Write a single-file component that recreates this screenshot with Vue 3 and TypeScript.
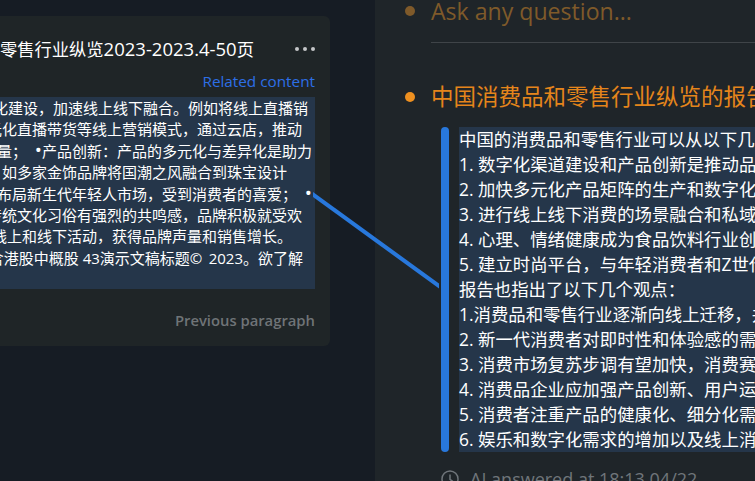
<script setup lang="ts">
type SourceLine = { text: string; gap: number };

// gap = distance from the right edge of the highlight to the end of the line
const sourceLines: SourceLine[] = [
  { text: '字化建设，加速线上线下融合。例如将线上直播销', gap: 7 },
  { text: '多元化直播带货等线上营销模式，通过云店，推动', gap: 13 },
  { text: '销流量；  •产品创新：产品的多元化与差异化是助力', gap: 3 },
  { text: '牌，如多家金饰品牌将国潮之风融合到珠宝设计', gap: 28 },
  { text: '，布局新生代年轻人市场，受到消费者的喜爱；  •', gap: 3 },
  { text: '传统文化习俗有强烈的共鸣感，品牌积极就受欢', gap: 13 },
  { text: '动线上和线下活动，获得品牌声量和销售增长。', gap: 23 },
  { text: '含港股中概股 43演示文稿标题©\u2009 2023。欲了解', gap: 12 },
];

const answerLines: string[] = [
  '中国的消费品和零售行业可以从以下几个方面',
  '1. 数字化渠道建设和产品创新是推动品',
  '2. 加快多元化产品矩阵的生产和数字化',
  '3. 进行线上线下消费的场景融合和私域',
  '4. 心理、情绪健康成为食品饮料行业创',
  '5. 建立时尚平台，与年轻消费者和Z世代',
  '报告也指出了以下几个观点：',
  '1.消费品和零售行业逐渐向线上迁移，并',
  '2. 新一代消费者对即时性和体验感的需',
  '3. 消费市场复苏步调有望加快，消费赛',
  '4. 消费品企业应加强产品创新、用户运',
  '5. 消费者注重产品的健康化、细分化需',
  '6. 娱乐和数字化需求的增加以及线上消',
];
</script>

<template>
  <div class="page">
    <section class="source-pane">
      <div class="card">
        <header class="card-head">
          <h2 class="card-title">中国消费品和零售行业纵览<span class="title-num">2023-2023.4-50</span>页</h2>
          <div class="dots"><i></i><i></i><i></i></div>
        </header>
        <div class="related">Related content</div>
        <div class="excerpt">
          <div
            v-for="line in sourceLines"
            :key="line.text"
            class="excerpt-line"
            :style="{ paddingRight: line.gap + 'px' }"
          >
            <template v-for="(part, i) in line.text.split('•')" :key="i"><span v-if="i" class="bullet">•</span>{{ part }}</template>
          </div>
        </div>
        <div class="previous">Previous paragraph</div>
      </div>
    </section>

    <section class="chat-pane">
      <div class="question muted">
        <span class="dot"></span>
        <span class="ask">Ask any question...</span>
      </div>
      <div class="rule"></div>
      <div class="question">
        <span class="dot"></span>
        <h1 class="question-title">中国消费品和零售行业纵览的报告</h1>
      </div>
      <div class="answer">
        <div class="answer-bar"></div>
        <div class="answer-text">
          <div v-for="line in answerLines" :key="line" class="answer-line">{{ line }}</div>
        </div>
      </div>
      <div class="answered">
        <svg class="clock" width="18" height="18" viewBox="0 0 18 18" fill="none" stroke="#6f757a" stroke-width="1.5">
          <circle cx="9" cy="9" r="8" />
          <path d="M9 4.5V9.4L11.8 11.4" />
        </svg>
        <span>AI answered at 18:13 04/22</span>
      </div>
    </section>

    <!-- link from the highlighted source to the answer -->
    <svg class="link" width="755" height="481" viewBox="0 0 755 481">
      <polygon points="313,192 439,283.5 439,288.5 313,197" fill="#2878dc" />
    </svg>
  </div>
</template>

<style>
html,
body {
  margin: 0;
  background: #161c24;
}
</style>

<style scoped>
.page {
  position: relative;
  display: flex;
  width: 755px;
  height: 481px;
  overflow: hidden;
  background: #161c24;
  color: #fff;
  font-family: "Open Sans", "Noto Sans CJK SC", sans-serif;
}
.source-pane {
  flex: 0 0 375px;
  overflow: hidden;
  padding-top: 16px;
  box-sizing: border-box;
}
.card {
  box-sizing: border-box;
  width: 630px;
  height: 330px;
  margin-left: -300px;
  padding: 0 15px;
  background: #1f2527;
  border-radius: 6px;
}
.card-head {
  box-sizing: border-box;
  display: flex;
  align-items: center;
  justify-content: flex-end;
  gap: 41px;
  height: 50px;
  padding-top: 16px;
}
.card-title {
  margin: 0;
  font-size: 17.3px;
  font-weight: 400;
  line-height: 24px;
  white-space: nowrap;
}
.title-num {
  font-size: 18.5px;
}
.dots {
  display: flex;
  gap: 4px;
}
.dots i {
  width: 4px;
  height: 4px;
  border-radius: 50%;
  background: #c4c6c8;
}
.related {
  height: 31px;
  color: #2d6fe6;
  font-size: 15.3px;
  line-height: 31px;
  text-align: right;
}
.excerpt {
  box-sizing: border-box;
  height: 192px;
  padding-top: 1px;
  background: #25364a;
}
.excerpt-line {
  font-size: 15px;
  line-height: 21.4px;
  text-align: right;
  white-space: pre;
}
.bullet {
  font-size: 19px;
  line-height: 0;
}
.previous {
  margin-top: 19px;
  color: #6f7477;
  font-size: 14.8px;
  font-weight: 600;
  line-height: 24px;
  text-align: right;
}
.chat-pane {
  flex: 1;
  min-width: 0;
  padding-left: 56px;
  overflow: hidden;
  background: #1f2529;
}
.question {
  display: flex;
  align-items: center;
  height: 32px;
  margin-left: -26px;
  margin-top: 38px;
}
.question.muted {
  margin-top: -5px;
}
.dot {
  flex: none;
  width: 10px;
  height: 10px;
  margin-right: 16px;
  border-radius: 50%;
  background: #ee9020;
}
.muted .dot {
  background: #7f5a2a;
}
.ask {
  color: #7f5a2a;
  font-size: 23.1px;
  line-height: 32px;
  white-space: nowrap;
}
.rule {
  height: 1px;
  margin-top: 15px;
  background: #3f4448;
}
.question-title {
  margin: 0;
  color: #e5851b;
  font-size: 22.5px;
  font-weight: 400;
  line-height: 32px;
  white-space: nowrap;
}
.answer {
  display: flex;
  gap: 10px;
  margin-top: 14px;
  margin-left: 10px;
}
.answer-bar {
  flex: none;
  width: 8px;
  background: #2878dc;
  border-radius: 4px;
}
.answer-text {
  flex: 1;
  min-width: 0;
  background: #25364a;
}
.answer-line {
  font-size: 17.4px;
  line-height: 25px;
  white-space: nowrap;
}
.answered {
  display: flex;
  align-items: center;
  gap: 11px;
  margin-top: 15px;
  margin-left: 10px;
  color: #6f757a;
  font-size: 18px;
  line-height: 24px;
  white-space: nowrap;
}
.clock {
  flex: none;
}
.link {
  position: absolute;
  top: 0;
  left: 0;
  pointer-events: none;
}
</style>
